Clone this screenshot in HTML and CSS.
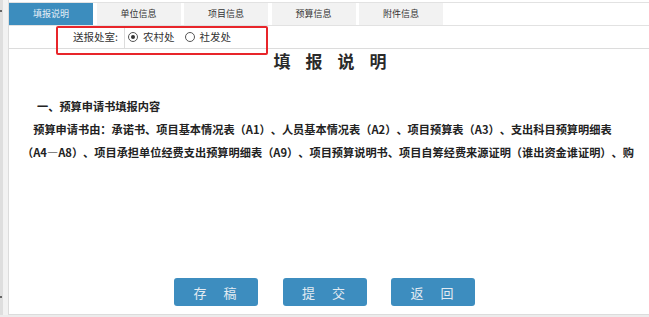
FILE: index.html
```html
<!DOCTYPE html>
<html lang="zh-CN">
<head>
  <meta charset="UTF-8" />
  <meta name="viewport" content="width=device-width, initial-scale=1.0" />
  <title>填报说明</title>
  <link rel="stylesheet" href="styles.css">
</head>
<body>
<div class="frame">
  <div class="scroll-edge"><span class="edge-mark top"></span><span class="edge-mark bottom"></span></div>

  <div class="main">
    <!-- tabs -->
    <div class="tabs">
      <div class="tab active-tab">填报说明</div>
      <div class="tab">单位信息</div>
      <div class="tab">项目信息</div>
      <div class="tab">预算信息</div>
      <div class="tab">附件信息</div>
    </div>

    <!-- office selector -->
    <div class="office-row">
      <div class="office-label">送报处室:</div>
      <div class="office-options">
        <label class="radio"><span class="dot checked"></span>农村处</label>
        <label class="radio"><span class="dot"></span>社发处</label>
      </div>
      <div class="highlight"></div>
    </div>

    <!-- instructions -->
    <div class="doc">
      <h2 class="doc-title">填报说明</h2>
      <h4 class="doc-section">一、预算申请书填报内容</h4>
      <p class="doc-text">预算申请书由：承诺书、项目基本情况表<span class="code">（A1）</span>、人员基本情况表<span class="code">（A2）</span>、项目预算表<span class="code">（A3）</span>、支出科目预算明细表<span class="code">（A4—A8）</span>、项目承担单位经费支出预算明细表<span class="code">（A9）</span>、项目预算说明书、项目自筹经费来源证明<span class="code">（谁出资金谁证明）</span>、购置设备清单及相关附件组成，请按顺序逐项填写。</p>
    </div>

    <div class="actions">
      <button class="btn" type="button">存　稿</button>
      <button class="btn" type="button">提　交</button>
      <button class="btn" type="button">返　回</button>
    </div>
  </div>
</div>
</body>
</html>
```

FILE: styles.css
```css
  html, body {
    margin: 0;
    padding: 0;
    background: #ececec;
  }

  body {
    font-family: "Noto Sans CJK SC", "Liberation Sans", sans-serif;
    color: #222;
    width: 649px;
    height: 317px;
    overflow: hidden;
  }

  .frame {
    display: flex;
    height: 315px;
  }

  .scroll-edge {
    position: relative;
    width: 8px;
    flex: none;
    background: linear-gradient(to right, #dedede 0, #dedede 3px, #f2f2f2 3px, #f2f2f2 8px);
  }

  .edge-mark {
    position: absolute;
    left: 0;
    width: 2px;
    height: 2px;
    background: #666;
  }

  .edge-mark.top {
    top: 10px;
  }

  .edge-mark.bottom {
    top: 296px;
  }

  .main {
    flex: 1;
    display: flex;
    flex-direction: column;
    background: #fff;
    border-left: 1px solid #dcdcdc;
    border-bottom: 1px solid #dcdcdc;
  }

  /* tabs */
  .tabs {
    display: flex;
    gap: 3.5px;
    margin-top: 2px;
    border-top: 1px solid #e2e2e2;
    border-bottom: 1px solid #e2e2e2;
    height: 22px;
  }

  .tab {
    width: 84px;
    line-height: 22px;
    text-align: center;
    font-size: 9px;
    color: #333;
    background: #f2f2f2;
  }

  .active-tab {
    background: #3c8dbe;
    color: #e4eef6;
  }

  /* office selector */
  .office-row {
    position: relative;
    display: flex;
    height: 22px;
    border-bottom: 1px solid #dcdcdc;
    font-size: 10.5px;
    line-height: 22px;
    color: #333;
  }

  .office-label {
    width: 109px;
    padding-right: 6px;
    text-align: right;
    border-right: 1px solid #dcdcdc;
  }

  .office-options {
    display: flex;
    gap: 10px;
    padding-left: 3px;
  }

  .radio {
    display: flex;
    align-items: center;
    gap: 5px;
  }

  .dot {
    position: relative;
    width: 8px;
    height: 8px;
    border: 1px solid #555;
    border-radius: 50%;
    background: #fff;
  }

  .dot.checked::after {
    content: "";
    position: absolute;
    left: 2px;
    top: 2px;
    width: 4px;
    height: 4px;
    border-radius: 50%;
    background: #333;
  }

  .highlight {
    position: absolute;
    left: 47px;
    top: 0;
    width: 208px;
    height: 25px;
    border: 2px solid #e8252a;
    border-radius: 2px;
    pointer-events: none;
  }

  /* instructions */
  .doc {
    height: 115px;
    overflow: hidden;
    padding: 0 11px 0 13px;
    text-spacing-trim: space-all;
  }

  .doc-title {
    margin: 0;
    font-size: 17px;
    line-height: 24px;
    font-weight: bold;
    letter-spacing: 15px;
    text-indent: 15px;
    text-align: center;
    color: #2a2a2a;
  }

  .doc-section {
    margin: 22px 0 0;
    padding-left: 15px;
    font-size: 11.2px;
    line-height: 23px;
    font-weight: bold;
  }

  .doc-text {
    margin: 0;
    font-size: 11.2px;
    line-height: 23px;
    font-weight: bold;
    text-indent: 1em;
  }

  .code {
    white-space: nowrap;
  }

  /* buttons */
  .actions {
    margin-top: auto;
    display: flex;
    justify-content: center;
    gap: 24.5px;
    padding: 0 9px 8px 0;
  }

  .btn {
    width: 84px;
    height: 28px;
    padding: 0;
    border: none;
    border-radius: 3px;
    background: #3d8dbf;
    color: #e3ebf2;
    font-family: "Noto Sans CJK SC", sans-serif;
    font-size: 13px;
    letter-spacing: 2px;
    cursor: pointer;
  }

  .btn:hover {
    background: #357fae;
  }
```
